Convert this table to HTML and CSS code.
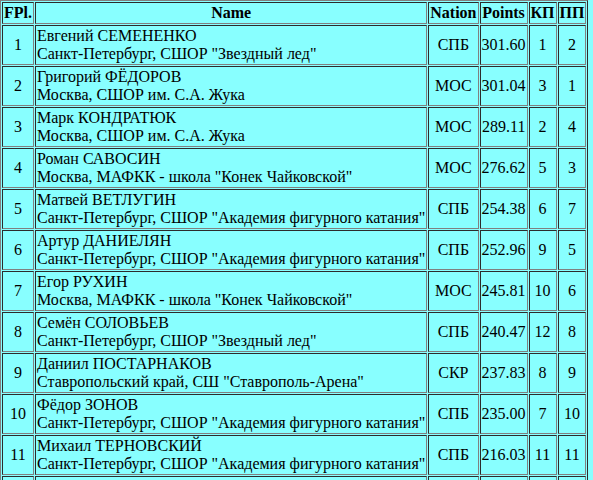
FILE: index.html
```html
<!DOCTYPE html>
<html>
<head>
<meta charset="utf-8">
<link rel="stylesheet" href="styles.css">
</head>
<body>
<table class="res">
<tr><th>FPl.</th><th>Name</th><th>Nation</th><th>Points</th><th>КП</th><th>ПП</th></tr>
<tr><td class="c">1</td><td>Евгений СЕМЕНЕНКО<br>Санкт-Петербург, СШОР "Звездный лед"</td><td class="c">СПБ</td><td class="r">301.60</td><td class="c">1</td><td class="c">2</td></tr>
<tr><td class="c">2</td><td>Григорий ФЁДОРОВ<br>Москва, СШОР им. С.А. Жука</td><td class="c">МОС</td><td class="r">301.04</td><td class="c">3</td><td class="c">1</td></tr>
<tr><td class="c">3</td><td>Марк КОНДРАТЮК<br>Москва, СШОР им. С.А. Жука</td><td class="c">МОС</td><td class="r">289.11</td><td class="c">2</td><td class="c">4</td></tr>
<tr><td class="c">4</td><td>Роман САВОСИН<br>Москва, МАФКК - школа "Конек Чайковской"</td><td class="c">МОС</td><td class="r">276.62</td><td class="c">5</td><td class="c">3</td></tr>
<tr><td class="c">5</td><td>Матвей ВЕТЛУГИН<br>Санкт-Петербург, СШОР "Академия фигурного катания"</td><td class="c">СПБ</td><td class="r">254.38</td><td class="c">6</td><td class="c">7</td></tr>
<tr><td class="c">6</td><td>Артур ДАНИЕЛЯН<br>Санкт-Петербург, СШОР "Академия фигурного катания"</td><td class="c">СПБ</td><td class="r">252.96</td><td class="c">9</td><td class="c">5</td></tr>
<tr><td class="c">7</td><td>Егор РУХИН<br>Москва, МАФКК - школа "Конек Чайковской"</td><td class="c">МОС</td><td class="r">245.81</td><td class="c">10</td><td class="c">6</td></tr>
<tr><td class="c">8</td><td>Семён СОЛОВЬЕВ<br>Санкт-Петербург, СШОР "Звездный лед"</td><td class="c">СПБ</td><td class="r">240.47</td><td class="c">12</td><td class="c">8</td></tr>
<tr><td class="c">9</td><td>Даниил ПОСТАРНАКОВ<br>Ставропольский край, СШ "Ставрополь-Арена"</td><td class="c">СКР</td><td class="r">237.83</td><td class="c">8</td><td class="c">9</td></tr>
<tr><td class="c">10</td><td>Фёдор ЗОНОВ<br>Санкт-Петербург, СШОР "Академия фигурного катания"</td><td class="c">СПБ</td><td class="r">235.00</td><td class="c">7</td><td class="c">10</td></tr>
<tr><td class="c">11</td><td>Михаил ТЕРНОВСКИЙ<br>Санкт-Петербург, СШОР "Академия фигурного катания"</td><td class="c">СПБ</td><td class="r">216.03</td><td class="c">11</td><td class="c">11</td></tr>
<tr class="next"><td></td><td></td><td></td><td></td><td></td><td></td></tr>
</table>
</body>
</html>
```
FILE: styles.css
```css
html, body {
  margin: 0;
  padding: 0;
  background: #88ffff;
}
body {
  font-family: "Liberation Serif", "Times New Roman", serif;
  font-size: 16px;
  color: #000;
}
.res {
  border: 1px outset #808080;
  border-spacing: 1px;
  border-collapse: separate;
}
.res th, .res td {
  border: 1px inset #808080;
  padding: 1px;
}
.res th {
  font-weight: bold;
  text-align: center;
}
.res td {
  text-align: left;
  vertical-align: middle;
}
.res td.c { text-align: center; }
.res td.r { text-align: right; }
.res .next td { height: 35px; }
```
